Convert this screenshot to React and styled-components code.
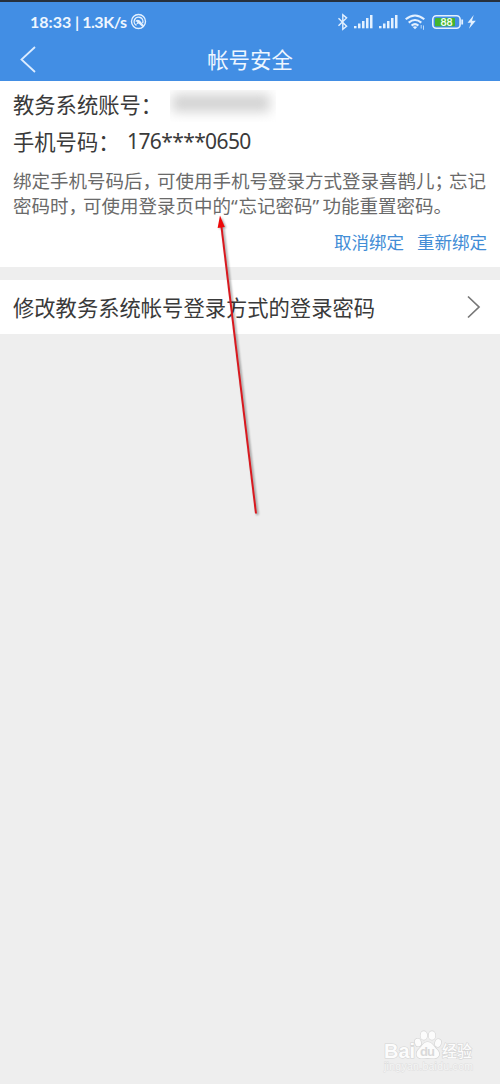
import React from 'react';
import styled, { createGlobalStyle } from 'styled-components';

const cjk = `'Noto Sans CJK SC', sans-serif`;

const GlobalStyle = createGlobalStyle`
  * {
    box-sizing: border-box;
  }

  body {
    margin: 0;
    background: #eeeeee;
    font-family: ${cjk};
  }
`;

const Screen = styled.div`
  position: relative;
  width: 500px;
  height: 1084px;
  overflow: hidden;
  background: #eeeeee;
`;

const Header = styled.header`
  height: 81px;
  border-top: 2px solid #26303c;
  background: #428ee4;
  color: #eef6ff;
`;

const StatusBar = styled.div`
  display: flex;
  align-items: center;
  justify-content: space-between;
  height: 39px;
  padding: 0 23px 0 30px;
`;

const StatusText = styled.div`
  display: flex;
  align-items: center;
  font-family: Lato, ${cjk};
  font-size: 16px;
  font-weight: 700;
  line-height: 20px;
  white-space: pre;
`;

const Clock = styled.span`
  width: 45px;
`;

const Speed = styled.span`
  width: 55px;
  letter-spacing: -0.45px;
`;

const NavBar = styled.div`
  display: grid;
  grid-template-columns: 60px 1fr 60px;
  align-items: center;
  height: 38px;
`;

const BackIcon = styled.svg`
  display: block;
  margin-left: 19px;
`;

const Title = styled.h1`
  margin: 0 0 2px;
  font-size: 21.4px;
  font-weight: 400;
  line-height: 30px;
  text-align: center;
`;

const Card = styled.section`
  height: 186px;
  padding: 5px 13px 0;
  background: #ffffff;
`;

const Field = styled.div`
  display: flex;
  align-items: center;
  height: ${props => props.height}px;
  color: #3a3a3a;
  font-size: 21.3px;
  line-height: 30px;
`;

const FieldLabel = styled.span`
  flex: none;
  width: ${props => props.width}px;
  white-space: nowrap;
`;

const PhoneNumber = styled.span`
  font-family: 'Noto Sans', ${cjk};
  font-size: 21px;
  letter-spacing: -0.6px;
`;

const Redacted = styled.span`
  width: 106px;
  height: 32px;
  margin-top: 3px;
  overflow: hidden;

  &::before {
    content: '';
    display: block;
    width: 98px;
    height: 18px;
    margin: 4px 0 0 2px;
    background: #d3d3d3;
    filter: blur(6px);
  }
`;

const Hint = styled.p`
  margin: 9px 0 0;
  color: #6a6a6a;
  font-size: 18.5px;
  line-height: 25px;
  white-space: nowrap;
`;

const Mark = styled.span`
  letter-spacing: -4px;
`;

const Quote = styled.span`
  font-family: 'Noto Sans', ${cjk};
  letter-spacing: ${props => props.spacing}px;
`;

const Actions = styled.div`
  display: flex;
  justify-content: flex-end;
  gap: 13px;
  margin-top: 11px;
`;

const Action = styled.a`
  color: #428dd6;
  font-size: 17.5px;
  line-height: 26px;
`;

const LinkRow = styled.div`
  display: flex;
  align-items: center;
  justify-content: space-between;
  height: 54px;
  margin-top: 13px;
  padding: 0 19px 0 13px;
  background: #ffffff;
  color: #3a3a3a;
  font-size: 21.3px;
  line-height: 30px;
`;

const Pointer = styled.svg`
  position: absolute;
  top: 205px;
  left: 200px;
`;

const Shadow = styled.g`
  opacity: 0.35;
  filter: blur(1.2px);
`;

const Watermark = styled.svg`
  position: absolute;
  left: 375px;
  top: 1022px;
`;

const StatusIcons = () => (
  <svg width="142" height="24" viewBox="335 10 142 24" fill="none">
    <path
      d="M338.5 18.2 346.6 26.2 342.8 29.3V14.7L346.6 17.9 338.5 25.8"
      stroke="#e4f1ff"
      strokeWidth="1.4"
    />
    {[354, 379].map(x => (
      <g key={x} fill="#e4f1ff">
        <rect x={x} y="26" width="2.5" height="2.3" />
        <rect x={x + 4} y="23.5" width="2.5" height="4.8" />
        <rect x={x + 8} y="21" width="2.5" height="7.3" />
        <rect x={x + 12} y="18" width="2.5" height="10.3" />
        <rect x={x + 16} y="15" width="2.5" height="13.3" />
      </g>
    ))}
    <g stroke="#e4f1ff" strokeWidth="2.1">
      <path d="M405.7 19.3Q415 11.7 424.3 19.3" />
      <path d="M408.7 22.6Q415 17.4 421.3 22.6" />
      <path d="M411.6 25.6Q415 22.8 418.4 25.6" />
    </g>
    <path d="M412.8 26.9Q415 25.4 417.2 26.9L415 29.2Z" fill="#e4f1ff" />
    <path d="M421.2 28.5V25M423.5 25.5v4.3" stroke="#b9d8fa" strokeWidth="1" />
    <rect x="432.8" y="15.8" width="27.3" height="12.5" rx="3.5" stroke="#e4f1ff" strokeWidth="1.6" />
    <rect x="435" y="18" width="20" height="8.2" rx="1" fill="#43b52f" />
    <text
      x="446.5"
      y="26"
      textAnchor="middle"
      fill="#f2fff5"
      fontFamily="Lato, sans-serif"
      fontSize="10.5"
      fontWeight="700"
    >
      88
    </text>
    <path d="M462.2 19.5v5" stroke="#e4f1ff" strokeWidth="1.8" />
    <path d="M473.7 15 467.6 22.7H471L469 28.8 475.8 20.7H472Z" fill="#e4f1ff" />
  </svg>
);

const SpeedIcon = () => (
  <svg width="17" height="17" viewBox="0 0 17 17" fill="none">
    <circle cx="8.5" cy="8.5" r="7" stroke="#e4f1ff" strokeWidth="1.4" />
    <path
      d="M6.5 12.4A4.4 4.4 0 1 1 12.6 10.2"
      stroke="#e4f1ff"
      strokeWidth="1.4"
    />
    <path d="M5.2 8.2Q7.5 5.6 9.8 7.6L14 12.6 12.6 14 8.6 10.4 6.2 11.6 7.4 9Z" fill="#e4f1ff" />
  </svg>
);

const Arrow = () => (
  <Pointer width="75" height="320" viewBox="200 205 75 320">
    <Shadow transform="translate(1.5 1)">
      <path d="M221.5 227 256 514" stroke="#000000" strokeWidth="2.4" />
      <path d="M220 216 217.7 228 224.8 227Z" fill="#000000" />
    </Shadow>
    <path d="M221.5 227 256 513.5" stroke="#d9191f" strokeWidth="2" />
    <path d="M220 215.5 217.6 228 224.8 227Z" fill="#ee0808" />
  </Pointer>
);

const BaiduMark = () => (
  <Watermark width="120" height="58" viewBox="375 1022 120 58">
    <g fill="#fcfcfc" stroke="#d4d4d4" strokeWidth="1.2" paintOrder="stroke">
      <text
        x="384"
        y="1057.5"
        fontFamily="Liberation Sans, sans-serif"
        fontSize="20"
        fontWeight="700"
        textLength="31"
        lengthAdjust="spacingAndGlyphs"
      >
        Bai
      </text>
      <ellipse cx="418" cy="1042.5" rx="3" ry="4" transform="rotate(-15 418 1042.5)" />
      <ellipse cx="423.8" cy="1035.5" rx="3.3" ry="4.3" />
      <ellipse cx="432" cy="1035.5" rx="3.3" ry="4.3" />
      <ellipse cx="438" cy="1043" rx="3" ry="4" transform="rotate(15 438 1043)" />
      <path d="M427.5 1042C423 1042 422.5 1046 419 1049C415 1052.5 416 1058 421 1058.5L427.5 1058 434 1058.5C440 1058 440.5 1053 437 1049.5C433 1046 432.5 1042 427.5 1042Z" />
      <text
        x="442"
        y="1057"
        fontFamily={cjk}
        fontSize="15.5"
        fontWeight="500"
        textLength="30"
        lengthAdjust="spacingAndGlyphs"
      >
        经验
      </text>
    </g>
    <text
      x="420"
      y="1056"
      fill="#d9d9d9"
      fontFamily="Liberation Sans, sans-serif"
      fontSize="13"
      fontWeight="700"
      textLength="15"
    >
      du
    </text>
    <text
      x="384"
      y="1070"
      fill="#f6f6f6"
      stroke="#dedede"
      strokeWidth="1"
      paintOrder="stroke"
      fontFamily="Liberation Sans, sans-serif"
      fontSize="10.5"
      textLength="89"
    >
      jingyan.baidu.com
    </text>
  </Watermark>
);

export default function App() {
  return (
    <Screen>
      <GlobalStyle />
      <Header>
        <StatusBar>
          <StatusText>
            <Clock>18:33</Clock>
            <Speed>| 1.3K/s</Speed>
            <SpeedIcon />
          </StatusText>
          <StatusIcons />
        </StatusBar>
        <NavBar>
          <BackIcon width="18" height="28" viewBox="0 0 18 28">
            <path d="M16 1 2.5 13.5 16 26" fill="none" stroke="#dcecff" strokeWidth="1.8" />
          </BackIcon>
          <Title>帐号安全</Title>
        </NavBar>
      </Header>

      <Card>
        <Field height={36}>
          <FieldLabel width={157}>教务系统账号：</FieldLabel>
          <Redacted />
        </Field>
        <Field height={37}>
          <FieldLabel width={114}>手机号码：</FieldLabel>
          <PhoneNumber>176****0650</PhoneNumber>
        </Field>
        <Hint>
          绑定手机号码后<Mark>，</Mark>可使用手机号登录方式登录喜鹊儿
          <Mark>；</Mark>忘记
          <br />
          密码时<Mark>，</Mark>可使用登录页中的
          <Quote spacing={0.8}>“</Quote>忘记密码<Quote spacing={3.4}>”</Quote>
          功能重置密码。
        </Hint>
        <Actions>
          <Action>取消绑定</Action>
          <Action>重新绑定</Action>
        </Actions>
      </Card>

      <LinkRow>
        修改教务系统帐号登录方式的登录密码
        <svg width="15" height="24" viewBox="0 0 15 24">
          <path d="M2 1.5 13 12 2 22.5" fill="none" stroke="#777777" strokeWidth="1.7" />
        </svg>
      </LinkRow>

      <Arrow />
      <BaiduMark />
    </Screen>
  );
}
